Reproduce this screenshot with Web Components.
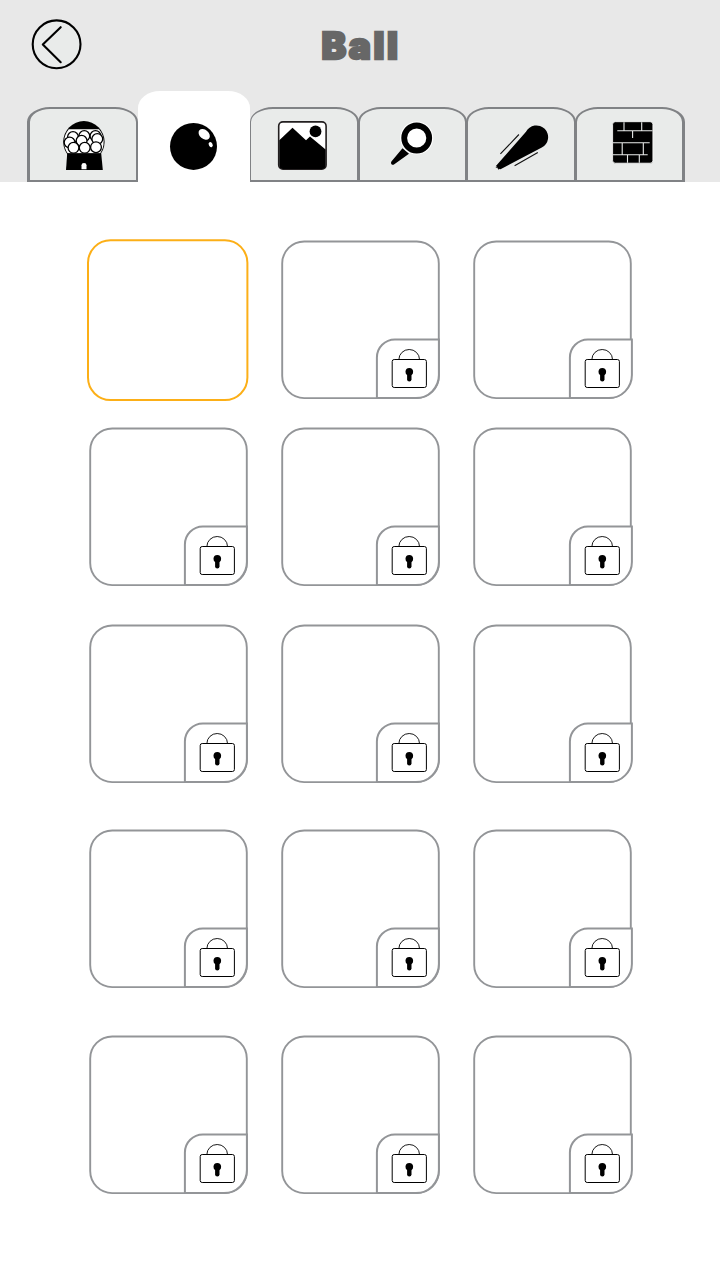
<!DOCTYPE html>
<html lang="en"><head><meta charset="utf-8"><title>Ball</title>
<style>html,body{margin:0;background:#fff}body{font-family:Lato,"Liberation Sans",sans-serif}</style></head>
<body><ball-shop></ball-shop>
<script>
const define=(name,html,setup)=>customElements.define(name,class extends HTMLElement{
  constructor(){super();const t=document.createElement('template');t.innerHTML=html;
    this.attachShadow({mode:'open'}).append(t.content.cloneNode(true));}
  connectedCallback(){if(setup)setup(this,this.shadowRoot);}
});

const icons={
machine:`<circle cx="83.9" cy="141.8" r="20.7"/><path d="M68.8 129.3H99A19.8 19.8 0 0 1 100 153.4H67.8A19.8 19.8 0 0 1 68.8 129.3Z" fill="#fff"/>
<g fill="#fff" stroke="#000" stroke-width="1.3"><circle cx="73" cy="137" r="5.4"/><circle cx="84.3" cy="136" r="5.4"/><circle cx="95.5" cy="136" r="5.4"/><circle cx="69.6" cy="142.5" r="5.4"/><circle cx="81.6" cy="140.8" r="5.4"/><circle cx="97.3" cy="139" r="5.4"/><circle cx="73.5" cy="147.8" r="5.4"/><circle cx="84.7" cy="147.8" r="5.4"/><circle cx="96" cy="147.2" r="5.4"/></g>
<path d="M67.2 153.3H101.2L102.8 170H66Z"/><path d="M81.5 169.2V165.3Q81.5 163 84 163Q86.5 163 86.5 165.3V169.2Z" fill="#fff"/>`,
ball:`<circle cx="193.5" cy="146.4" r="23.5"/><ellipse cx="204.2" cy="134.4" rx="6.3" ry="4.5" transform="rotate(40 204.2 134.4)" fill="#fff"/><ellipse cx="210.7" cy="144.6" rx="2.6" ry="1.9" transform="rotate(62 210.7 144.6)" fill="#fff"/>`,
picture:`<rect x="278.7" y="121.9" width="47.4" height="47.2" rx="4.2" fill="#fff" stroke="#231f20" stroke-width="1.6"/><path d="M279.3 140.3L292.5 127.7L306 140.2L310 136.5L325.6 149.5V165Q325.6 168.9 322 168.9H283Q279.3 168.9 279.3 165Z"/><circle cx="315.5" cy="131.4" r="5.9"/>`,
paddle:`<path d="M402.5 148.2L409 153.8L394.3 164.3Q392.8 165.4 391.5 164.3Q390.4 163 391.4 161.4Z"/><circle cx="416.7" cy="138" r="16.6" fill="#fff"/><circle cx="416.7" cy="138" r="12.5" fill="#fff" stroke="#000" stroke-width="5.8"/>`,
comet:`<path d="M495.7 166.2L526 131.8A11.7 11.7 0 1 1 541.8 147.5L500.5 169.2L498.8 168.7L499.3 170L497.6 168.8L498 167.8L495.4 168.1L497.2 166.8Z"/><path d="M500.4 153.9L518.9 134.5M514.6 165.8L537.8 152.4" fill="none" stroke="#111" stroke-width="1.1"/>`,
bricks:`<rect x="612.6" y="121.7" width="40.3" height="41.5" rx="2.8" stroke="#fff" stroke-width=".8"/><path d="M624 122.2V130.5M641.7 122.2V130.5M617.3 130.7H652.5M632.6 131V138M613 142.7H649.7M622.2 143V154.5M643.3 143V154.5M613 154.8H647.7M627.5 155V162.7M639.3 155V162.7" fill="none" stroke="#e9ebea" stroke-width="1.1"/>`};

define('back-button',`<style>:host{display:block;width:52px;height:52px}svg{display:block}</style>
<svg width="52" height="52" viewBox="31 18 52 52" fill="none" stroke="#000" stroke-linecap="round" stroke-linejoin="round"><circle cx="56.6" cy="44.3" r="23.9" fill="#e9ebea" stroke-width="2.1"/><path d="M60.7 27.2L42.8 44.6L60.7 62.2" stroke-width="2.1"/></svg>`);

define('shop-tab',`<style>
:host{display:block;box-sizing:border-box;height:75px;background:#e9ebea;border:2px solid #808285;border-radius:23px 23px 0 0/15px 15px 0 0}
:host([icon=machine]){border-left-width:3px}:host([icon=bricks]){border-right-width:3px}
:host([icon=picture]){border-left-width:1px}
:host([active]){height:91px;background:#fff;border:0;border-radius:22px 22px 0 0/17px 17px 0 0}
svg{display:block}</style><svg></svg>`,(host,root)=>{
 const [x,w]={machine:[27,111],ball:[138,112],picture:[250,109],paddle:[358,109],comet:[466,110],bricks:[575,110]}[host.getAttribute('icon')];
 const active=host.hasAttribute('active'),s=getComputedStyle(host),left=active?0:parseFloat(s.borderLeftWidth);
 const inner=w-left-(active?0:parseFloat(s.borderRightWidth)),h=active?91:71,y=active?91:109;
 const svg=root.querySelector('svg');svg.setAttribute('width',inner);svg.setAttribute('height',h);
 svg.setAttribute('viewBox',`${x+left} ${y} ${inner} ${h}`);svg.innerHTML=icons[host.getAttribute('icon')];
});

define('shop-header',`<style>
:host{display:grid;box-sizing:border-box;height:182px;background:#e8e8e8;grid-template-rows:91px 91px}
.top{display:grid;grid-template-columns:52px 1fr 52px;padding:18px 31px 0}
h1{margin:0;padding:3px 0 0 2px;text-align:center;font:900 37px/50px Inter,Lato,sans-serif;color:#676767;-webkit-text-stroke:2.4px #676767;letter-spacing:2.6px}
nav{display:grid;grid-template-columns:111px 112px 108px 108px 109px 110px;align-items:end;padding-left:27px}
shop-tab[icon=picture],shop-tab[icon=paddle],shop-tab[icon=comet]{margin-right:-1px}
</style><div class="top"><back-button></back-button><h1><slot></slot></h1></div>
<nav><shop-tab icon="machine"></shop-tab><shop-tab icon="ball" active></shop-tab><shop-tab icon="picture"></shop-tab><shop-tab icon="paddle"></shop-tab><shop-tab icon="comet"></shop-tab><shop-tab icon="bricks"></shop-tab></nav>`);

define('ball-card',`<style>:host{display:block;height:159px}svg{display:block;overflow:visible}
.sel{display:none}
:host([selected]) .sel{display:block}:host([selected]) .normal{display:none}</style>
<svg width="159" height="159" fill="#fff"><g class="normal"><rect x="1.2" y=".5" width="156.6" height="156.6" rx="22" stroke="#939598" stroke-width="1.9"/>
<g class="badge"><path d="M95.9 157.1V116.5A18 18 0 0 1 113.9 98.5H157.9V134.1A23 23 0 0 1 134.9 157.1Z" stroke="#939598" stroke-width="2"/>
<g stroke="#000" stroke-width="1"><path d="M117.9 118.5A10.3 10 0 0 1 138.5 118.5" fill="none" stroke-width=".9"/><rect x="111.2" y="118.5" width="34.2" height="28" rx="2"/></g>
<circle cx="128.3" cy="130.8" r="3.8" fill="#000"/><path d="M128.3 132V138.2" stroke="#000" stroke-width="4.4" stroke-linecap="round"/></g></g>
<rect class="sel" x="-1" y="-.7" width="159.4" height="159.8" rx="22.5" stroke="#fcaf17" stroke-width="2"/></svg>`,
(host,root)=>root.querySelector('.badge').setAttribute('transform',`translate(${host.getAttribute('shift')} 0)`));

define('ball-grid',`<style>
:host{display:grid;grid-template-columns:repeat(3,192px);grid-template-rows:187px 197px 205px 206px 159px;padding:59px 0 0 89.3px}
</style>${Array.from({length:15},(_,i)=>`<ball-card shift="${[0,0,1][i%3]}"${i?'':' selected'}></ball-card>`).join('')}`);

define('ball-shop',`<style>:host{display:block;width:720px;height:1280px;overflow:hidden;background:#fff}</style><shop-header>Ball</shop-header><ball-grid></ball-grid>`);
</script></body></html>
